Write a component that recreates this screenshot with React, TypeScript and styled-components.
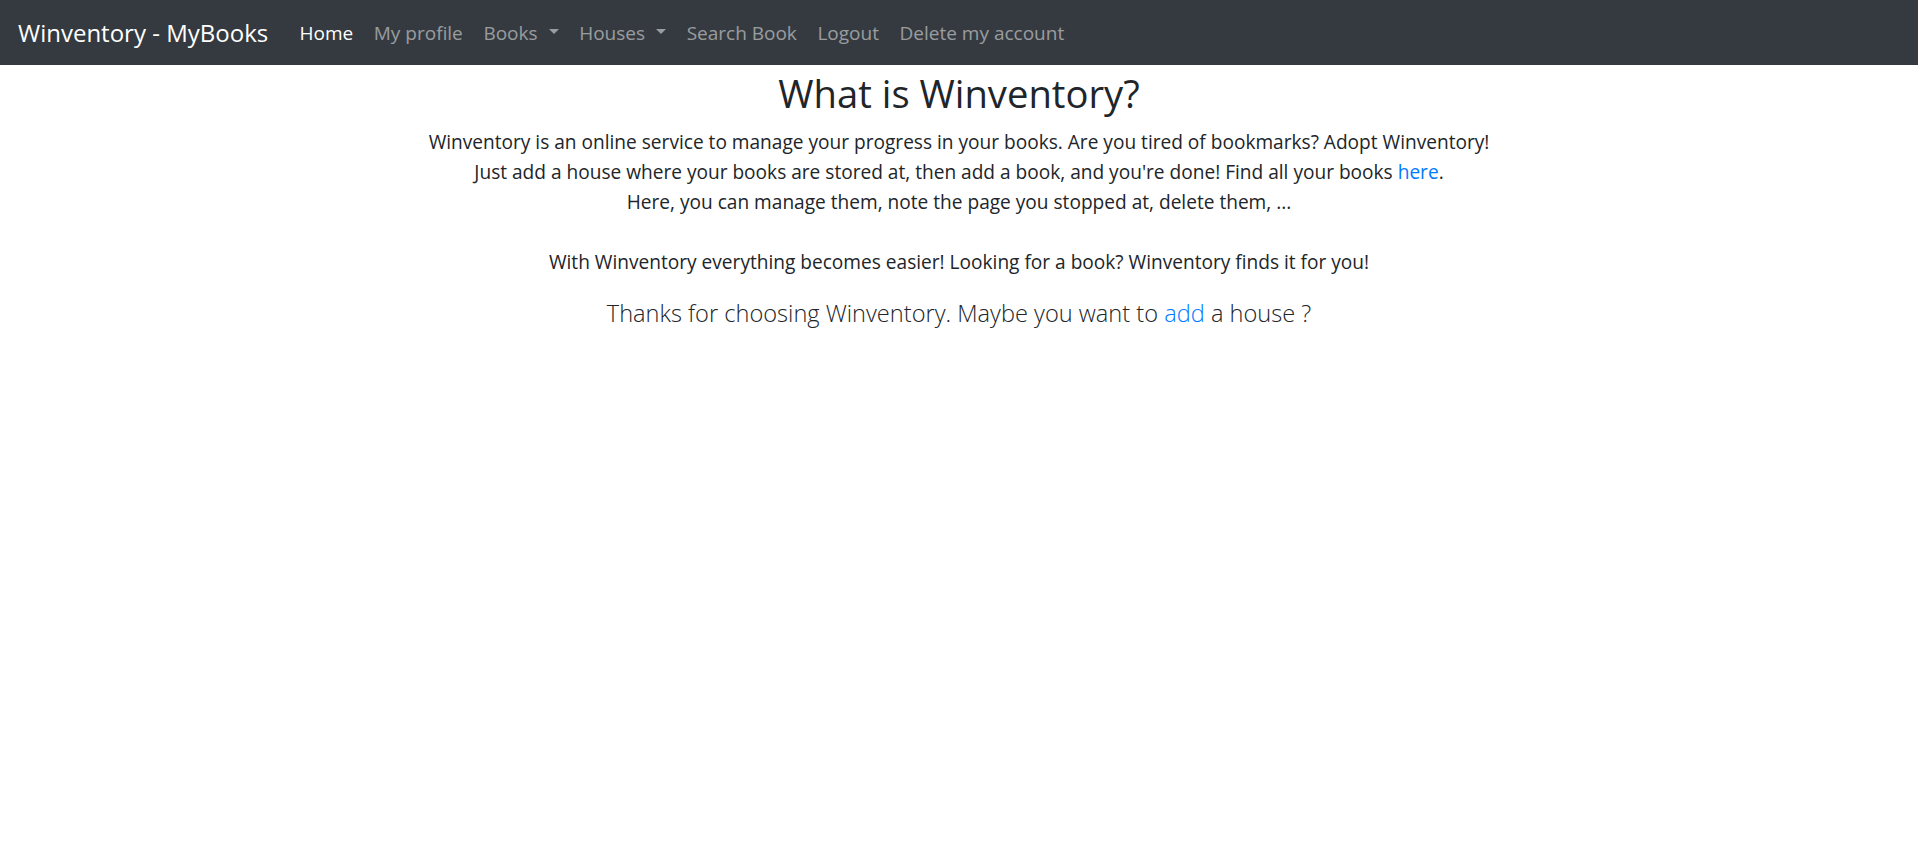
import React from "react";
import styled, { createGlobalStyle } from "styled-components";

const GlobalStyle = createGlobalStyle`
  html, body { margin: 0; padding: 0; background: #fff; }
  body {
    font-family: "Open Sans", "Noto Sans", sans-serif;
    font-size: 19.1px;
    line-height: 30px;
    color: #212529;
  }
  * { box-sizing: border-box; }
`;

const NavBar = styled.nav`
  display: flex;
  align-items: center;
  height: 65px;
  padding: 0 20px 0 18px;
  background: #343a40;
`;

const Brand = styled.a`
  font-size: 24px;
  line-height: 37px;
  color: #fff;
  text-decoration: none;
  margin-right: 21px;
  white-space: nowrap;
`;

const NavList = styled.ul`
  display: flex;
  list-style: none;
  margin: 0;
  padding: 0;
`;

const NavLink = styled.a<{ $active?: boolean; $dropdown?: boolean }>`
  display: flex;
  align-items: center;
  padding: 10px 10.3px;
  font-size: 19px;
  line-height: 30px;
  color: ${(p) => (p.$active ? "#fff" : "rgba(255,255,255,0.5)")};
  text-decoration: none;
  white-space: nowrap;
  ${(p) =>
    p.$dropdown
      ? `&::after {
          content: "";
          display: block;
          margin-left: 11px;
          margin-top: -3px;
          border-top: 5px solid;
          border-right: 5px solid transparent;
          border-left: 5px solid transparent;
          border-bottom: 0;
        }`
      : ""}
`;

const Main = styled.main`
  text-align: center;
  padding-top: 4px;
`;

const Title = styled.h2`
  font-size: 38.2px;
  font-weight: 400;
  line-height: 48px;
  margin: 0 0 10px;
`;

const Text = styled.p`
  margin: 0 0 18px;
`;

const Lead = styled.p`
  font-size: 23.6px;
  font-weight: 300;
  line-height: 37px;
  margin: 0 0 20px;
`;

const Link = styled.a`
  color: #007bff;
  text-decoration: none;
`;

const items: { label: string; active?: boolean; dropdown?: boolean }[] = [
  { label: "Home", active: true },
  { label: "My profile" },
  { label: "Books", dropdown: true },
  { label: "Houses", dropdown: true },
  { label: "Search Book" },
  { label: "Logout" },
  { label: "Delete my account" },
];

export default function App() {
  return (
    <>
      <GlobalStyle />
      <NavBar>
        <Brand href="#">Winventory - MyBooks</Brand>
        <NavList>
          {items.map((it) => (
            <li key={it.label}>
              <NavLink href="#" $active={it.active} $dropdown={it.dropdown}>
                {it.label}
              </NavLink>
            </li>
          ))}
        </NavList>
      </NavBar>
      <Main>
        <Title>What is Winventory?</Title>
        <Text>
          Winventory is an online service to manage your progress in your books. Are you tired of bookmarks? Adopt Winventory!
          <br />
          Just add a house where your books are stored at, then add a book, and you're done! Find all your books{" "}
          <Link href="#">here</Link>.
          <br />
          Here, you can manage them, note the page you stopped at, delete them, ...
          <br />
          <br />
          With Winventory everything becomes easier! Looking for a book? Winventory finds it for you!
        </Text>
        <Lead>
          Thanks for choosing Winventory. Maybe you want to <Link href="#">add</Link> a house ?
        </Lead>
      </Main>
    </>
  );
}
